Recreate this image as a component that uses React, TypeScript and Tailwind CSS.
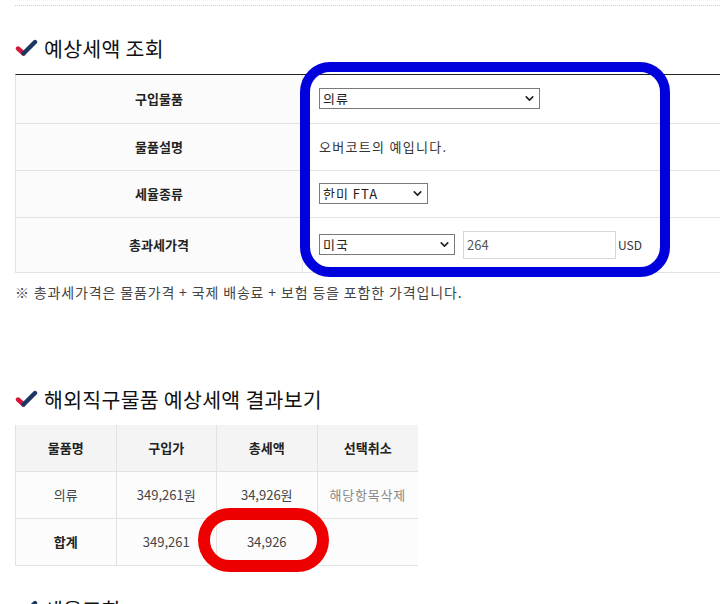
import { ChevronDown } from "lucide-react";

const FONT = { fontFamily: '"Noto Sans CJK KR", "Noto Sans", sans-serif' };

// two-tone tick used before every section heading
function Tick() {
  return (
    <svg width="23" height="18" viewBox="0 0 23 18" className="shrink-0">
      <path d="M3 9.5 L8.5 14.5" stroke="#d3163a" strokeWidth="4.4" strokeLinecap="round" fill="none" />
      <path d="M8.5 14.5 L20 3" stroke="#1c3764" strokeWidth="4.4" strokeLinecap="round" fill="none" />
    </svg>
  );
}

function Heading({ children }: { children: string }) {
  return (
    <h2 className="flex items-center gap-[6px] text-[20.5px] font-normal tracking-[0.3px] text-[#111] leading-none">
      <Tick />
      <span>{children}</span>
    </h2>
  );
}

function Select({ value, width }: { value: string; width: string }) {
  return (
    <div className={`relative h-[21px] ${width}`}>
      <select
        defaultValue={value}
        className="h-full w-full appearance-none border border-[#7a7a7a] bg-white pl-[3px] text-[13px] leading-none tracking-[1px] text-[#222] outline-none"
      >
        <option>{value}</option>
      </select>
      <ChevronDown className="pointer-events-none absolute right-[4px] top-[4px] h-[13px] w-[13px] text-[#222]" strokeWidth={3} />
    </div>
  );
}

const ROWS = [
  { label: "구입물품", h: "h-[48px]" },
  { label: "물품설명", h: "h-[47px]" },
  { label: "세율종류", h: "h-[47px]" },
  { label: "총과세가격", h: "h-[55px]" },
];

function LookupTable() {
  return (
    <div className="border-t border-t-[#222] border-l border-l-[#e2e2e2] border-b border-b-[#e2e2e2]">
      {ROWS.map((r, i) => (
        <div key={r.label} className={`flex ${r.h} ${i > 0 ? "border-t border-[#e2e2e2]" : ""}`}>
          <div className="flex w-[287px] shrink-0 items-center justify-center border-r border-[#e6e6e6] bg-[#fbfbfb] text-[13px] font-bold text-[#222]">
            {r.label}
          </div>
          <div className="flex flex-1 items-center gap-[8px] bg-white pl-[16px] text-[13px] text-[#333]">
            {i === 0 && <Select value="의류" width="w-[221px]" />}
            {i === 1 && <span className="tracking-[1.3px]">오버코트의 예입니다.</span>}
            {i === 2 && <Select value="한미 FTA" width="w-[109px]" />}
            {i === 3 && (
              <>
                <Select value="미국" width="w-[136px]" />
                <input
                  defaultValue="264"
                  className="h-[28px] w-[153px] border border-[#d6d6d6] px-[3px] text-[13px] text-[#555] outline-none"
                />
                <span className="-ml-[6px] text-[12px] text-[#333]">USD</span>
              </>
            )}
          </div>
        </div>
      ))}
    </div>
  );
}

const RESULT = [
  ["의류", "349,261원", "34,926원", "해당항목삭제"],
  ["합계", "349,261", "34,926", ""],
];

function ResultTable() {
  return (
    <div className="w-[403px] border-l border-l-[#e2e2e2] border-b border-b-[#e2e2e2] text-[13px]">
      <div className="grid h-[46px] grid-cols-4 bg-[#f4f4f4] font-bold text-[#222]">
        {["물품명", "구입가", "총세액", "선택취소"].map((h, i) => (
          <div key={h} className={`flex items-center justify-center ${i < 3 ? "border-r border-[#e2e2e2]" : ""}`}>
            {h}
          </div>
        ))}
      </div>
      {RESULT.map((row, r) => (
        <div key={r} className="grid h-[47px] grid-cols-4 border-t border-[#e2e2e2] bg-[#fcfcfc] text-[#444]">
          {row.map((c, i) => (
            <div
              key={i}
              className={`flex items-center justify-center ${i < 3 ? "border-r border-[#e2e2e2]" : ""} ${
                i === 0 && r === 1 ? "font-bold text-[#222]" : ""
              } ${i === 3 ? "tracking-[0.8px] text-[#888]" : ""}`}
            >
              {c}
            </div>
          ))}
        </div>
      ))}
    </div>
  );
}

export default function App() {
  return (
    <div className="relative h-[604px] w-[720px] overflow-hidden bg-white" style={FONT}>
      <div className="ml-[15px] mt-[5px] border-t border-dotted border-[#cfcfcf]" />

      <div className="pl-[15px] pt-[32px]">
        <Heading>예상세액 조회</Heading>
      </div>

      <div className="mt-[15px] pl-[15px]">
        <LookupTable />
        <p className="mt-[9px] text-[14px] tracking-[0.85px] text-[#444]">
          ※ 총과세가격은 물품가격 + 국제 배송료 + 보험 등을 포함한 가격입니다.
        </p>
      </div>

      <div className="pl-[15px] pt-[86px]">
        <Heading>해외직구물품 예상세액 결과보기</Heading>
      </div>

      <div className="mt-[16px] pl-[15px]">
        <ResultTable />
      </div>

      <div className="pl-[15px] pt-[33px]">
        <Heading>세율조회</Heading>
      </div>

      {/* annotations drawn over the page */}
      <div className="pointer-events-none absolute left-[300px] top-[62px] h-[215px] w-[370px] rounded-[30px] border-[10px] border-[#0000dc]" />
      <div className="pointer-events-none absolute left-[198px] top-[508px] h-[64px] w-[131px] rounded-full border-[12px] border-[#ee0000]" />
    </div>
  );
}
